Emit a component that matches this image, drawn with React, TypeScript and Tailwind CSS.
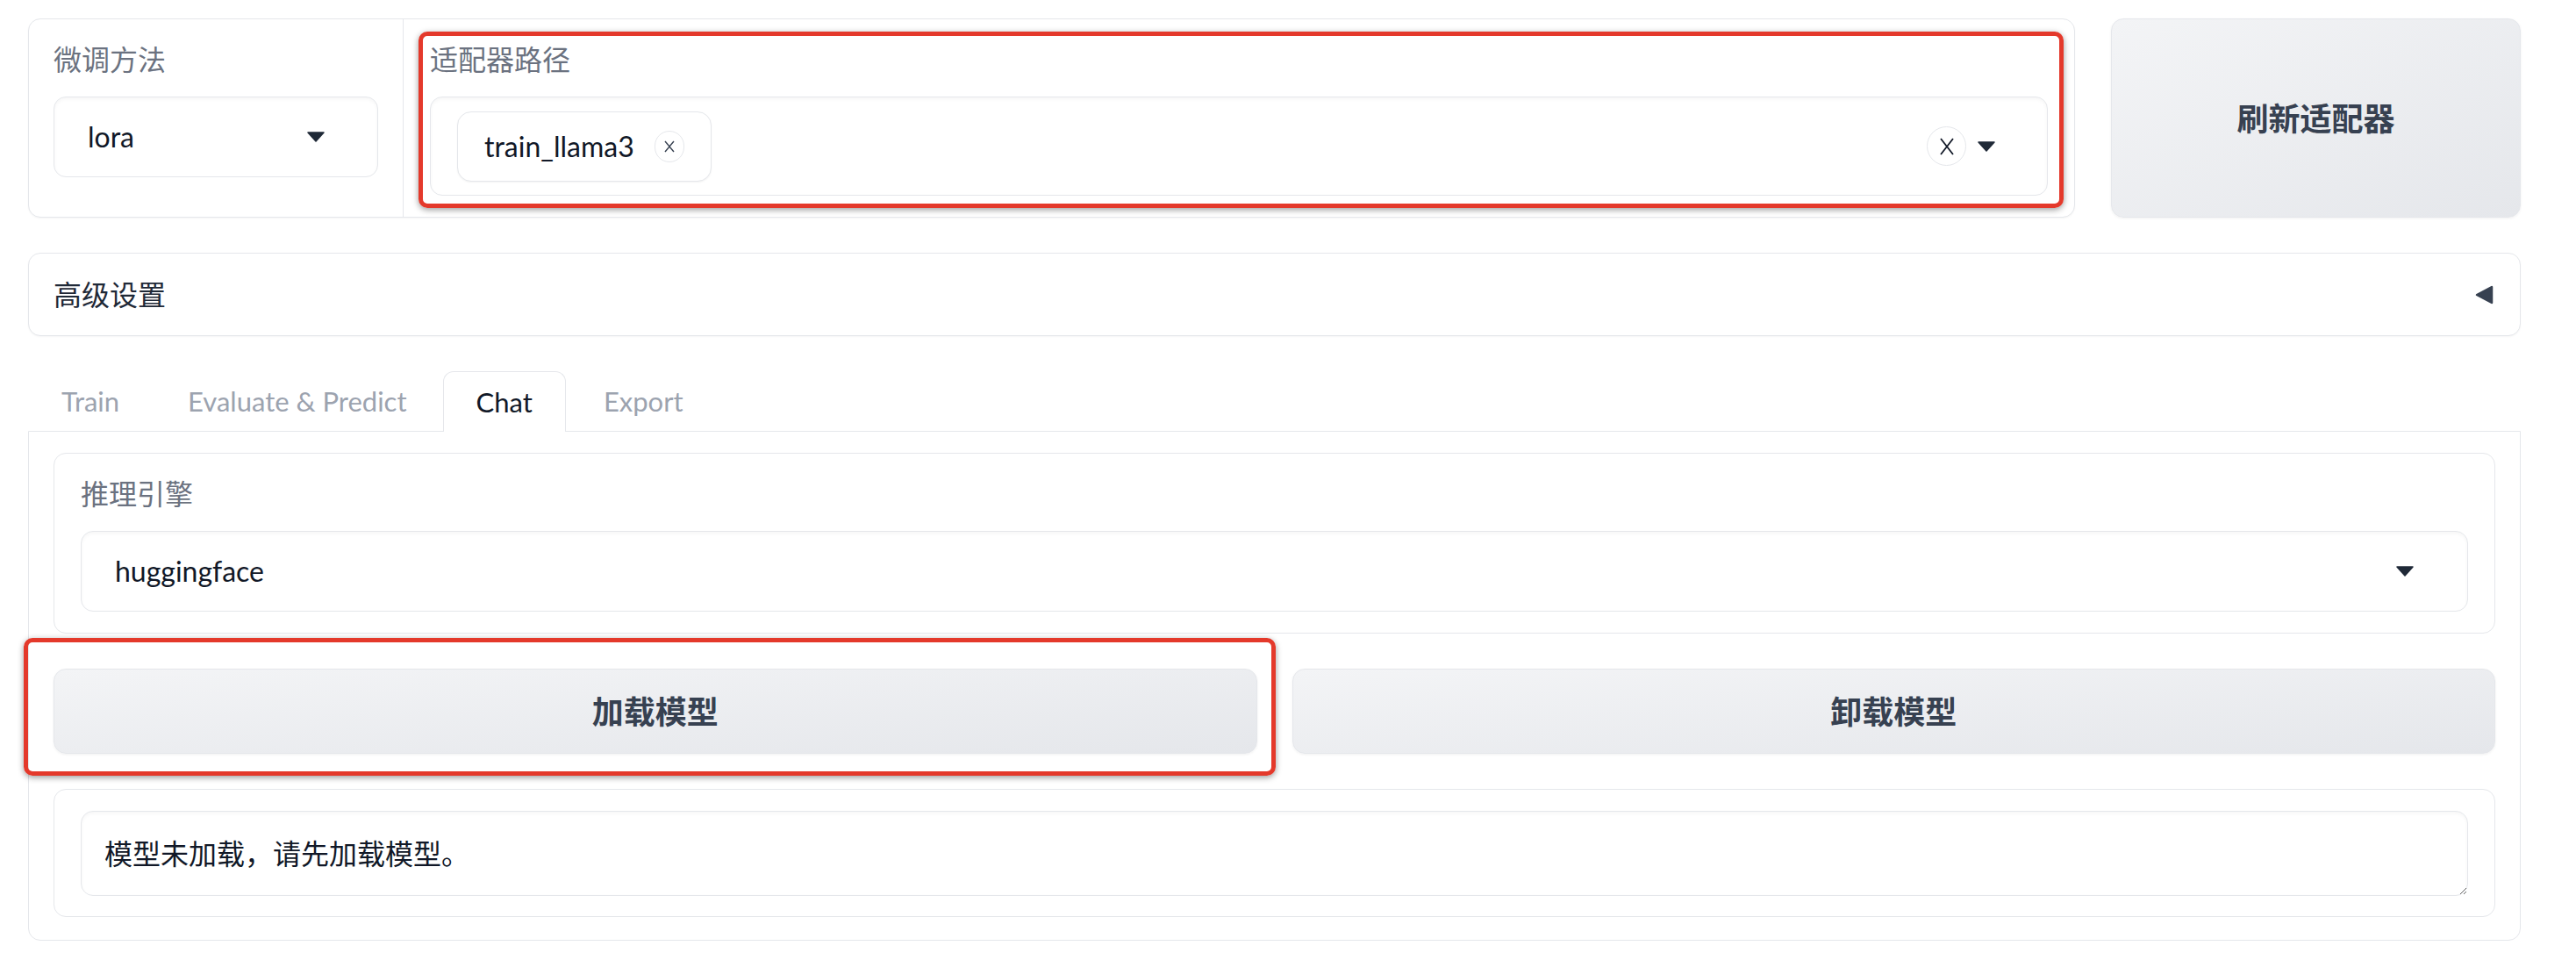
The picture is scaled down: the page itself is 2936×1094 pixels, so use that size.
import React from "react";

function Label({ children }: { children: React.ReactNode }) {
  return (
    <div className="mb-[20px] h-[44px] leading-[44px] text-[32px] text-[#6b7280]">{children}</div>
  );
}

function DownArrow() {
  return (
    <svg width="20" height="12" viewBox="0 0 20 12" className="shrink-0">
      <path d="M1 1 L19 1 L10 11 Z" fill="#1f2937" stroke="#1f2937" strokeWidth="1.5" strokeLinejoin="round" />
    </svg>
  );
}

function LeftArrow() {
  return (
    <svg width="22" height="22" viewBox="0 0 22 22" className="shrink-0">
      <path d="M20 2 L20 20 L3 11 Z" fill="#374151" stroke="#374151" strokeWidth="2.5" strokeLinejoin="round" />
    </svg>
  );
}

const inputCls =
  "rounded-[14px] border border-[#e5e7eb] bg-white shadow-[inset_0_2px_4px_rgba(0,0,0,0.04)]";

const btnCls =
  "flex items-center justify-center rounded-[14px] border border-[#e5e7eb] bg-linear-to-br from-[#f3f4f6] to-[#e5e7eb] text-[36px] font-bold text-[#374151] shadow-[0_1px_3px_rgba(0,0,0,0.06)]";

export default function App() {
  return (
    <div className="min-h-[1094px] bg-white pl-[32px] pr-[63px] pt-[21px] font-['Lato','Noto_Sans_CJK_SC',sans-serif] text-[32px] text-[#1f2937]">
      {/* top row */}
      <div className="flex gap-[41px]">
        <div className="flex flex-1 rounded-[14px] border border-[#e5e7eb] bg-white shadow-[0_1px_2px_rgba(0,0,0,0.04)]">
          <div className="w-[427px] shrink-0 border-r border-[#e5e7eb] px-[28px] pt-[24px] pb-[24px]">
            <Label>微调方法</Label>
            <div className={`${inputCls} flex h-[92px] items-center justify-between pl-[38px] pr-[60px]`}>
              <span className="text-[#111827]">lora</span>
              <DownArrow />
            </div>
          </div>
          <div className="relative flex-1 px-[30px] pt-[24px] pb-[24px]">
            <div className="pointer-events-none absolute left-[17px] top-[14px] right-[12px] bottom-[10px] rounded-[10px] border-[5px] border-[#e4392b] shadow-[0_2px_7px_rgba(0,0,0,0.4)]" />
            <Label>适配器路径</Label>
            <div className={`${inputCls} flex h-[113px] items-center pl-[30px] pr-[59px]`}>
              <div className="flex h-[80px] items-center rounded-[16px] border border-[#e5e7eb] bg-white pl-[30px] pr-[30px] shadow-[0_1px_2px_rgba(0,0,0,0.05)]">
                <span className="text-[#111827]">train_llama3</span>
                <span className="ml-[23px] flex h-[36px] w-[34px] items-center justify-center rounded-full border border-[#e5e7eb] bg-white">
                  <svg width="14" height="16" viewBox="0 0 14 16">
                    <path d="M2 2 L12 14 M12 2 L2 14" stroke="#374151" strokeWidth="1.4" />
                  </svg>
                </span>
              </div>
              <div className="flex-1" />
              <span className="flex h-[45px] w-[45px] items-center justify-center rounded-full border border-[#e5e7eb] bg-white">
                <svg width="18" height="22" viewBox="0 0 18 22">
                  <path d="M2 2 L16 20 M16 2 L2 20" stroke="#111827" strokeWidth="1.8" />
                </svg>
              </span>
              <span className="ml-[13px]">
                <DownArrow />
              </span>
            </div>
          </div>
        </div>
        <button className={`${btnCls} w-[467px] shrink-0`}>刷新适配器</button>
      </div>

      {/* accordion */}
      <div className="mt-[40px] flex h-[95px] items-center justify-between rounded-[14px] border border-[#e5e7eb] bg-white pl-[28px] pr-[30px] shadow-[0_1px_2px_rgba(0,0,0,0.04)]">
        <span className="text-[32px] text-[#1f2937]">高级设置</span>
        <LeftArrow />
      </div>

      {/* tabs */}
      <div className="mt-[40px] flex h-[68px] items-stretch gap-[6px] pl-[1px] text-[31px]">
        <div className="flex items-center px-[37px] text-[#9ca3af]">Train</div>
        <div className="flex items-center px-[35px] text-[#9ca3af]">Evaluate &amp; Predict</div>
        <div className="relative z-10 -mb-[1px] flex items-center rounded-t-[12px] border border-b-0 border-[#e5e7eb] bg-white px-[37px] text-[#111827]">
          Chat
        </div>
        <div className="flex items-center px-[37px] text-[#9ca3af]">Export</div>
      </div>

      {/* tab panel */}
      <div className="flex flex-col gap-[40px] rounded-b-[14px] border border-[#e5e7eb] bg-white px-[28px] pt-[24px] pb-[26px]">
        <div className="rounded-[14px] border border-[#e5e7eb] bg-white px-[30px] pt-[24px] pb-[24px]">
          <Label>推理引擎</Label>
          <div className={`${inputCls} flex h-[92px] items-center justify-between pl-[38px] pr-[61px]`}>
            <span className="text-[#111827]">huggingface</span>
            <DownArrow />
          </div>
        </div>

        <div className="grid grid-cols-2 gap-[40px]">
          <div className="relative">
            <div className="pointer-events-none absolute -left-[34px] -top-[35px] -right-[21px] -bottom-[25px] rounded-[10px] border-[5px] border-[#e4392b] shadow-[0_2px_7px_rgba(0,0,0,0.4)]" />
            <button className={`${btnCls} h-[97px] w-full`}>加载模型</button>
          </div>
          <button className={`${btnCls} h-[97px] w-full`}>卸载模型</button>
        </div>

        <div className="rounded-[14px] border border-[#e5e7eb] bg-white px-[30px] pt-[24px] pb-[23px]">
          <textarea
            readOnly
            value="模型未加载，请先加载模型。"
            className={`${inputCls} block h-[97px] w-full px-[26px] py-[26px] text-[32px] leading-[44px] text-[#111827] outline-none`}
          />
        </div>
      </div>
    </div>
  );
}
